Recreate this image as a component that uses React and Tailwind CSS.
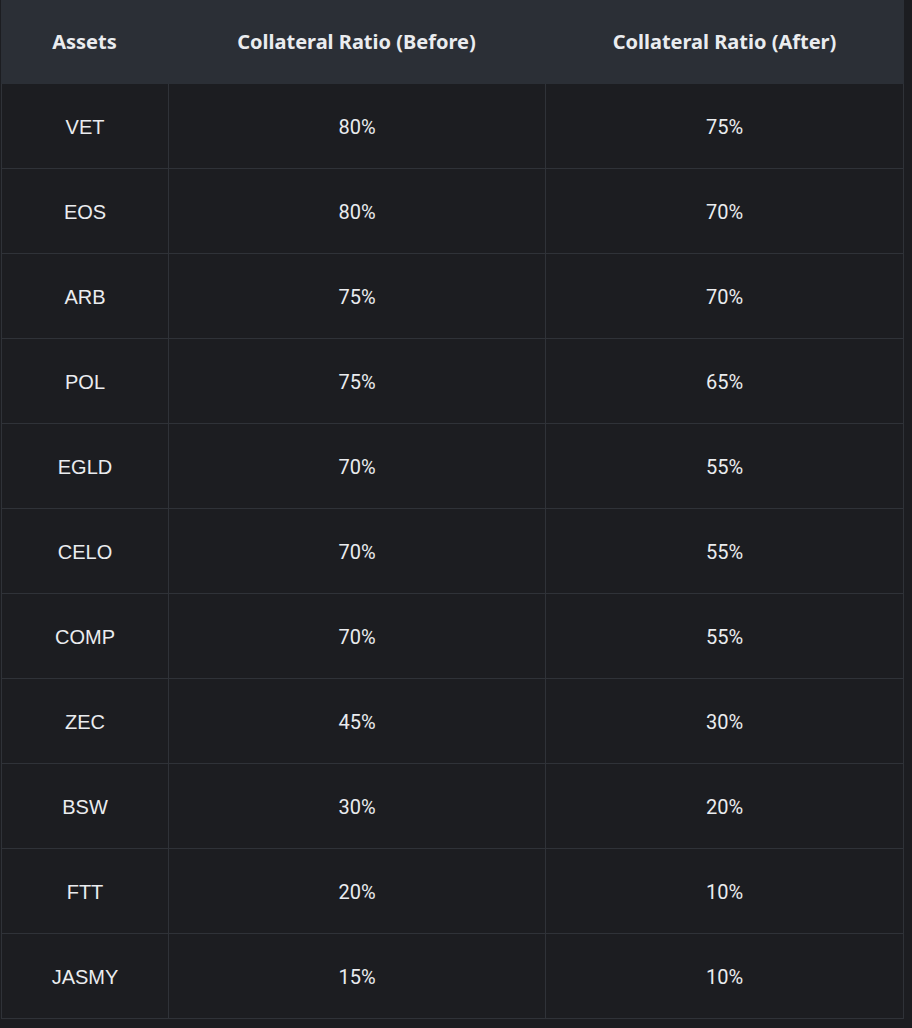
const rows = [
  ["VET", "80%", "75%"],
  ["EOS", "80%", "70%"],
  ["ARB", "75%", "70%"],
  ["POL", "75%", "65%"],
  ["EGLD", "70%", "55%"],
  ["CELO", "70%", "55%"],
  ["COMP", "70%", "55%"],
  ["ZEC", "45%", "30%"],
  ["BSW", "30%", "20%"],
  ["FTT", "20%", "10%"],
  ["JASMY", "15%", "10%"],
];

export default function App() {
  return (
    <div className="min-h-screen w-[912px] bg-[#1c1d21] pl-px">
      <div className="w-[903px]">
        <div className="grid h-[84px] grid-cols-[167px_377px_359px] bg-[#2b2f36] font-['Noto_Sans',sans-serif] text-[20px] font-bold text-[#eaecef]">
          <div className="flex items-center justify-center">Assets</div>
          <div className="flex items-center justify-center">Collateral Ratio (Before)</div>
          <div className="flex items-center justify-center">Collateral Ratio (After)</div>
        </div>
        {rows.map((r) => (
          <div
            key={r[0]}
            className="grid h-[85px] grid-cols-[167px_377px_359px] border-b border-[#2f3238] text-[#eaecef]"
          >
            <div className="flex items-center justify-center border-l border-[#2f3238] pt-0.5 font-['Liberation_Sans',sans-serif] text-[20px]">
              {r[0]}
            </div>
            <div className="flex items-center justify-center border-l border-[#2f3238] pt-0.5 font-['Roboto',sans-serif] text-[20px]">
              {r[1]}
            </div>
            <div className="flex items-center justify-center border-x border-[#2f3238] pt-0.5 font-['Roboto',sans-serif] text-[20px]">
              {r[2]}
            </div>
          </div>
        ))}
      </div>
    </div>
  );
}
